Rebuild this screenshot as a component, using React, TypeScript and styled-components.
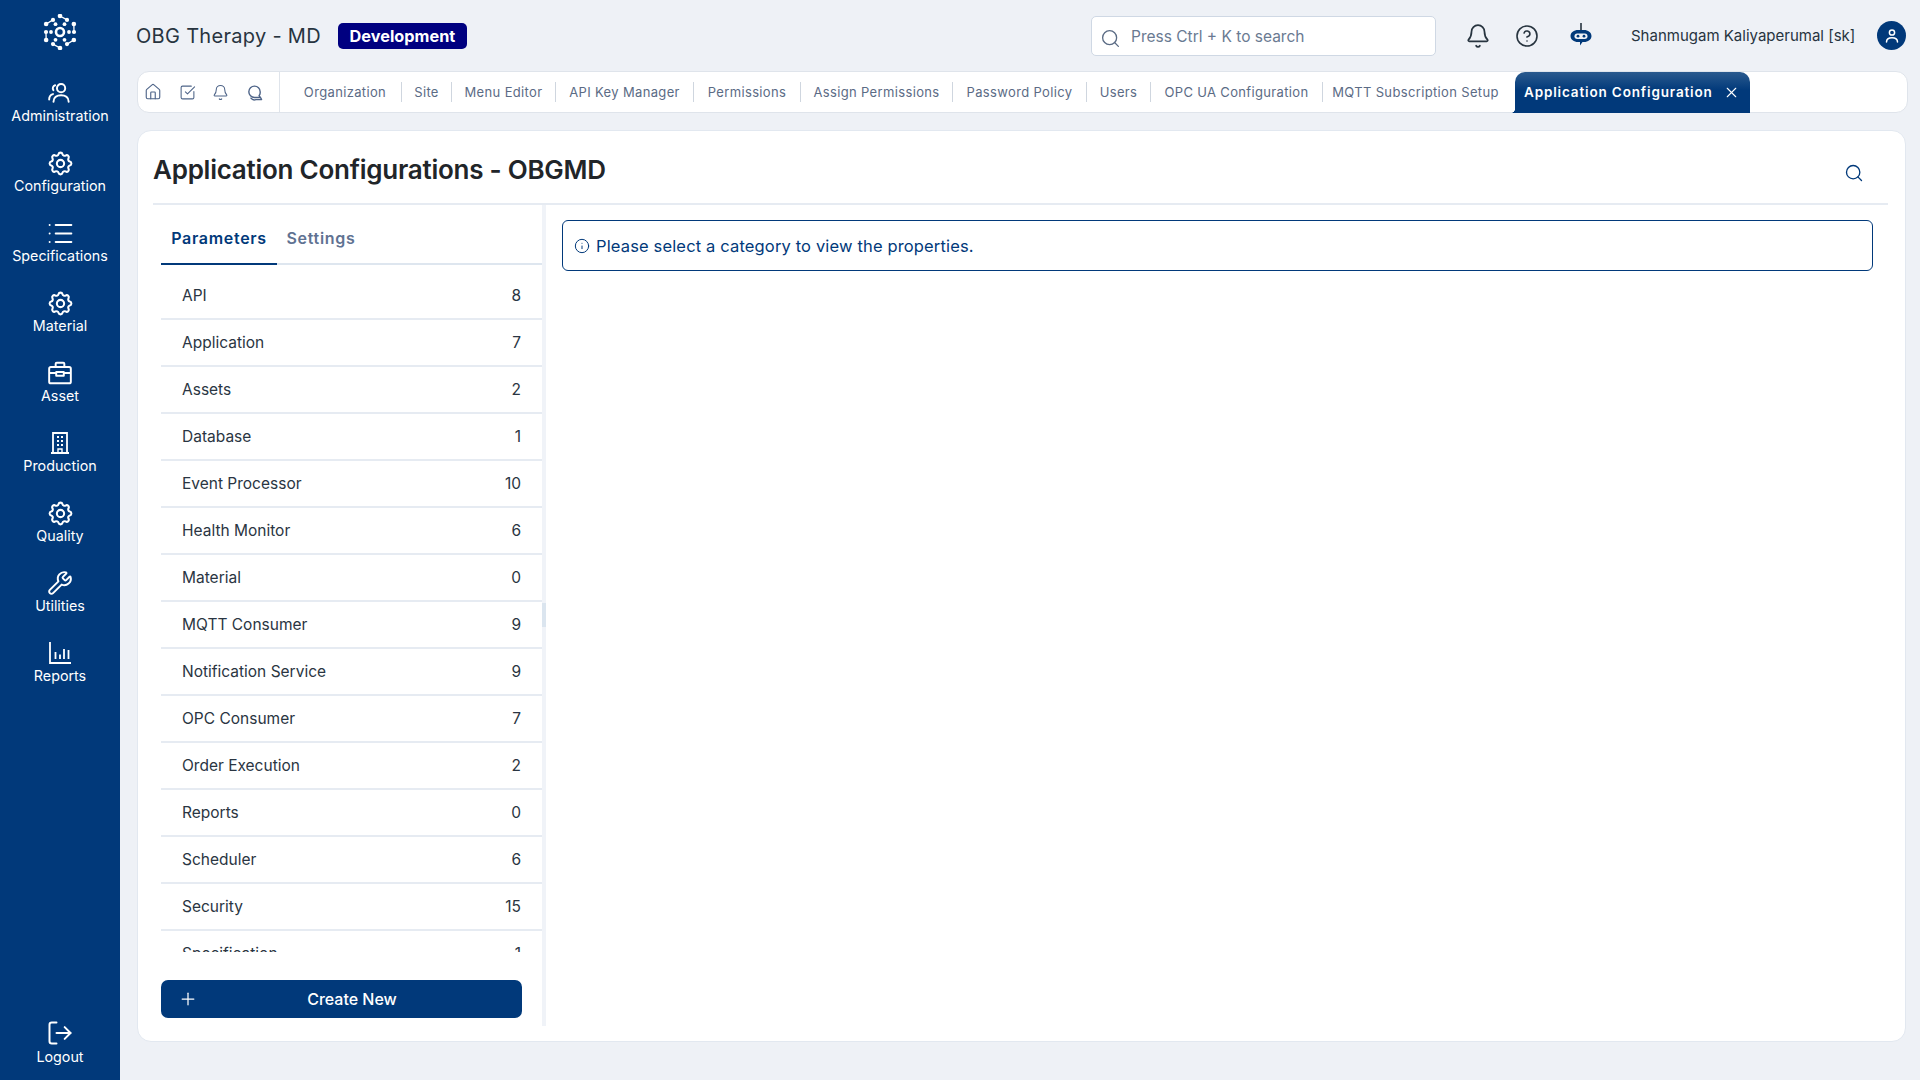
import React from "react";
import styled, { createGlobalStyle } from "styled-components";
import { Bell, CircleHelp, House, List, LogOut, Plus, Search, SquareCheckBig, Info, Wrench, X } from "lucide-react";
import { TbSettings } from "react-icons/tb";

const GlobalStyle = createGlobalStyle`
  html, body { margin: 0; padding: 0; background: #eef1f6; }
  * { box-sizing: border-box; }
  body { font-family: Inter, "Noto Sans", "Liberation Sans", sans-serif; overflow: hidden; }
`;

const Page = styled.div`
  display: flex;
  width: 1920px;
  height: 1080px;
  background: #eef1f6;
`;

const Sidebar = styled.aside`
  display: flex;
  flex-direction: column;
  width: 120px;
  flex: none;
  background: #01397a;
  color: #fff;
`;

const LogoBox = styled.div`
  display: flex;
  justify-content: center;
  align-items: flex-start;
  height: 70px;
  padding-top: 14px;
`;

const NavItem = styled.div<{ $bottom?: boolean }>`
  display: flex;
  flex-direction: column;
  align-items: center;
  gap: ${(p) => (p.$bottom ? "2px" : "1px")};
  height: 70px;
  padding-top: 11px;
  font-size: 14.3px;
  line-height: 20px;
  margin-top: ${(p) => (p.$bottom ? "auto" : "0")};
`;

const NavIcon = styled.span`
  display: flex;
  width: 24px;
  height: 24px;
  align-items: center;
  justify-content: center;
  svg { flex: none; }
`;

const Main = styled.main`
  flex: 1;
  min-width: 0;
  display: flex;
  flex-direction: column;
  padding: 0 12px 0 17px;
`;

const TopBar = styled.header`
  display: flex;
  align-items: center;
  height: 71px;
`;

const AppTitle = styled.div`
  margin-left: -1px;
  font-size: 20px;
  color: #27343f;
  letter-spacing: 0.3px;
`;

const EnvBadge = styled.span`
  margin-left: 17px;
  width: 129px;
  height: 26px;
  display: flex;
  align-items: center;
  justify-content: center;
  background: #000080;
  color: #fff;
  border-radius: 5px;
  font-size: 16.3px;
  font-weight: 700;
`;

const SearchBox = styled.div`
  margin-left: auto;
  width: 345px;
  height: 40px;
  display: flex;
  align-items: center;
  gap: 10px;
  padding: 2px 0 0 8px;
  background: #fff;
  border: 1px solid #cfd8e4;
  border-radius: 5px;
  color: #6a7a92;
  font-size: 15.5px;
  svg { flex: none; color: #5a6b84; margin-top: 3px; }
`;

const IconSlot = styled.span<{ $left: number }>`
  display: flex;
  margin-left: ${(p) => p.$left}px;
  color: #27343f;
`;

const UserArea = styled.div`
  display: flex;
  align-items: center;
  width: 315px;
`;

const UserName = styled.span`
  margin-left: 38px;
  font-size: 15px;
  color: #27343f;
  white-space: nowrap;
`;

const Avatar = styled.span`
  margin-left: auto;
  margin-right: 2px;
  width: 29px;
  height: 29px;
  border-radius: 50%;
  background: #01397a;
  display: flex;
  align-items: center;
  justify-content: center;
`;

const TabStrip = styled.nav`
  display: flex;
  align-items: center;
  height: 42px;
  background: #fff;
  border: 1px solid #dfe4eb;
  border-radius: 12px;
`;

const QuickIcons = styled.div`
  display: flex;
  align-items: center;
  height: 100%;
  width: 142px;
  flex: none;
  gap: 16.5px;
  padding-left: 6px;
  border-right: 1px solid #dfe4eb;
  color: #4e6488;
  margin-right: 9px;
`;

const PageTab = styled.div<{ $width: number; $last?: boolean }>`
  width: ${(p) => p.$width}px;
  flex: none;
  height: 20px;
  display: flex;
  align-items: center;
  justify-content: center;
  font-size: 13px;
  letter-spacing: 0.35px;
  color: #5b6b85;
  white-space: nowrap;
  border-right: ${(p) => (p.$last ? "none" : "1px solid #cfd6df")};
`;

const ActiveTab = styled.div`
  position: relative;
  flex: none;
  width: 235px;
  height: 41px;
  margin-left: 7px;
  display: flex;
  align-items: center;
  gap: 10px;
  padding-left: 9px;
  background: linear-gradient(#2a5a8e, #01397a 45%);
  color: #fff;
  border-radius: 10px 10px 0 0;
  font-size: 13.5px;
  font-weight: 600;
  letter-spacing: 0.85px;
  white-space: nowrap;
  &::before {
    content: "";
    position: absolute;
    left: -5px;
    bottom: 0;
    width: 5px;
    height: 5px;
    background: radial-gradient(circle at 0 0, transparent 5px, #01397a 5.5px);
  }
`;

const Card = styled.section`
  margin-top: 17px;
  width: 1769px;
  height: 912px;
  display: flex;
  flex-direction: column;
  background: #fff;
  border: 1px solid #e2e8f0;
  border-radius: 14px;
  padding: 0 17px 15px 15px;
`;

const CardHead = styled.div`
  display: flex;
  align-items: center;
  justify-content: space-between;
  height: 74px;
  flex: none;
  border-bottom: 2px solid #e6ebf2;
  padding: 0 24px 0 0;
  color: #01397a;
  svg { margin-top: 11px; }
`;

const Heading = styled.h1`
  margin: 5px 0 0;
  font-size: 26px;
  font-weight: 600;
  letter-spacing: -0.25px;
  color: #212529;
`;

const CardBody = styled.div`
  flex: 1;
  min-height: 0;
  display: flex;
`;

const LeftPane = styled.div`
  width: 389px;
  flex: none;
  display: flex;
  flex-direction: column;
  padding-left: 8px;
`;

const TabRow = styled.div`
  display: flex;
  height: 60px;
  flex: none;
  border-bottom: 2px solid #dee6ef;
`;

const PaneTab = styled.div<{ $active?: boolean }>`
  width: ${(p) => (p.$active ? 116 : 88)}px;
  height: 60px;
  padding-top: 22px;
  text-align: center;
  font-size: 16px;
  line-height: 22px;
  font-weight: 600;
  letter-spacing: 0.7px;
  color: ${(p) => (p.$active ? "#01397a" : "#5f7292")};
  border-bottom: 2px solid ${(p) => (p.$active ? "#01397a" : "transparent")};
`;

const RowList = styled.div`
  height: 687px;
  flex: none;
  overflow: hidden;
  padding-top: 8px;
`;

const CategoryRow = styled.div`
  display: flex;
  justify-content: space-between;
  align-items: center;
  height: 47px;
  padding: 0 21px;
  border-bottom: 2px solid #e6ebf2;
  font-size: 15.5px;
  color: #2a3542;
`;

const CreateButton = styled.button`
  margin-top: 28px;
  width: 361px;
  height: 38px;
  flex: none;
  display: flex;
  align-items: center;
  padding: 0 16px 0 17px;
  border: none;
  border-radius: 7px;
  background: #01397a;
  color: #fff;
  font-family: inherit;
  font-size: 16px;
  font-weight: 500;
  span { flex: 1; text-align: center; }
`;

const Splitter = styled.div`
  position: relative;
  width: 4px;
  flex: none;
  background: #f0f3f8;
  &::after {
    content: "";
    position: absolute;
    left: 0;
    right: 0;
    top: 398px;
    height: 24px;
    background: #dbe5ef;
  }
`;

const RightPane = styled.div`
  flex: 1;
  padding: 15px 15px 0 16px;
`;

const Notice = styled.div`
  height: 51px;
  display: flex;
  align-items: center;
  gap: 6px;
  padding-left: 11px;
  border: 1px solid #01397a;
  border-radius: 6px;
  color: #01397a;
  font-size: 16.5px;
  letter-spacing: 0.15px;
`;

const Logo = () => {
  const outer = [0, 60, 120, 180, 240, 300].map((a) => (a * Math.PI) / 180);
  const point = (r: number, a: number) => ({ x: 18 + r * Math.sin(a), y: 18 - r * Math.cos(a) });
  return (
    <svg width="36" height="36" viewBox="0 0 36 36" fill="#fff" stroke="#fff">
      {outer.map((a, i) => {
        const p = point(16, a);
        const q = point(14, a + Math.PI / 6);
        const s = point(9, a + Math.PI / 6);
        return (
          <g key={i}>
            <circle cx={p.x} cy={p.y} r="2.3" stroke="none" />
            <circle cx={q.x} cy={q.y} r="2.1" stroke="none" />
            <circle cx={s.x} cy={s.y} r="1.9" stroke="none" />
            <line x1={p.x} y1={p.y} x2={q.x} y2={q.y} strokeWidth="1.3" />
          </g>
        );
      })}
      <circle cx="18" cy="18" r="4" fill="none" strokeWidth="2.6" />
    </svg>
  );
};

const UsersIcon = () => (
  <svg width="26" height="26" viewBox="0 0 24 24" fill="none" stroke="#fff" strokeWidth="1.8" strokeLinecap="round">
    <circle cx="13" cy="7.5" r="3.8" />
    <path d="M6 20c0-3.8 3-6 7-6s7 2.2 7 6" />
    <path d="M7.5 4.8a3 3 0 0 0-1.6 4.6" />
    <path d="M2 18c0-2.8 1.2-4.4 3.5-5" />
  </svg>
);

const BriefcaseIcon = () => (
  <svg width="26" height="26" viewBox="0 0 24 24" fill="none" stroke="#fff" strokeWidth="1.8" strokeLinejoin="round">
    <rect x="2" y="6.5" width="20" height="15" rx="1.5" />
    <path d="M8 6.5V3.5a1 1 0 0 1 1-1h6a1 1 0 0 1 1 1v3" />
    <path d="M2 12h6.5M15.5 12H22M8.5 11h7v3.5h-7z" />
  </svg>
);

const BuildingIcon = () => (
  <svg width="24" height="24" viewBox="0 0 24 24" fill="none" stroke="#fff" strokeWidth="1.8">
    <path d="M5 22V2h14v20M3 22h18" />
    <path d="M10 22v-4h4v4" strokeWidth="1.4" />
    <path d="M9 6h2M13 6h2M9 10h2M13 10h2M9 14h2M13 14h2" strokeWidth="2" />
  </svg>
);

const ChartIcon = () => (
  <svg width="24" height="24" viewBox="0 0 24 24" fill="none" stroke="#fff" strokeWidth="1.8">
    <path d="M2 1v21h21" />
    <path d="M7.500 18v-7M12 18v-4.500M16 18V8M20.500 18v-9" />
  </svg>
);

const ChatIcon = () => (
  <svg width="17" height="17" viewBox="0 0 24 24" fill="none" stroke="currentColor" strokeWidth="2" strokeLinejoin="round" strokeLinecap="round">
    <path d="M20 11a8 8 0 1 0-8 8h8l-1.500-2.500A8 8 0 0 0 20 11z" />
    <path d="M7 20a6 6 0 0 0 7 2h8l-1.500-3" />
  </svg>
);

const BotIcon = () => (
  <svg width="24" height="28" viewBox="0 0 24 28" fill="#01397a">
    <rect x="11.200" y="1" width="1.600" height="7" fill="#27343f" />
    <path d="M9 8h6c4 0 7.500 2.500 7.500 6s-3.500 6-7.500 6h-1.500L11 23.500V20H9c-4 0-7.500-2.500-7.500-6S5 8 9 8z" />
    <rect x="5.500" y="11.500" width="13" height="5.500" rx="2.700" fill="#eef1f6" />
    <circle cx="9" cy="14.200" r="1.400" />
    <circle cx="15" cy="14.200" r="1.400" />
  </svg>
);

const AvatarIcon = () => (
  <svg width="18" height="18" viewBox="0 0 18 18" fill="none" stroke="#fff" strokeWidth="1.500" strokeLinecap="round">
    <circle cx="9" cy="5.500" r="2.600" />
    <path d="M3.500 15c0-2.800 2.500-4.300 5.500-4.300s5.500 1.500 5.500 4.300" />
  </svg>
);

const gear = <TbSettings size={29} strokeWidth={1.7} />;

const navItems = [
  { label: "Administration", icon: <UsersIcon /> },
  { label: "Configuration", icon: gear },
  { label: "Specifications", icon: <List size={29} strokeWidth={1.6} /> },
  { label: "Material", icon: gear },
  { label: "Asset", icon: <BriefcaseIcon /> },
  { label: "Production", icon: <BuildingIcon /> },
  { label: "Quality", icon: gear },
  { label: "Utilities", icon: <Wrench size={26} strokeWidth={1.8} /> },
  { label: "Reports", icon: <ChartIcon /> },
];

const pageTabs = [
  { label: "Organization", width: 113 },
  { label: "Site", width: 50 },
  { label: "Menu Editor", width: 104 },
  { label: "API Key Manager", width: 138 },
  { label: "Permissions", width: 107 },
  { label: "Assign Permissions", width: 152 },
  { label: "Password Policy", width: 134 },
  { label: "Users", width: 64 },
  { label: "OPC UA Configuration", width: 172 },
  { label: "MQTT Subscription Setup", width: 185, last: true },
];

const categories: [string, number][] = [
  ["API", 8],
  ["Application", 7],
  ["Assets", 2],
  ["Database", 1],
  ["Event Processor", 10],
  ["Health Monitor", 6],
  ["Material", 0],
  ["MQTT Consumer", 9],
  ["Notification Service", 9],
  ["OPC Consumer", 7],
  ["Order Execution", 2],
  ["Reports", 0],
  ["Scheduler", 6],
  ["Security", 15],
  ["Specification", 1],
];

export default function App() {
  return (
    <Page>
      <GlobalStyle />
      <Sidebar>
        <LogoBox>
          <Logo />
        </LogoBox>
        {navItems.map((item) => (
          <NavItem key={item.label}>
            <NavIcon>{item.icon}</NavIcon>
            {item.label}
          </NavItem>
        ))}
        <NavItem $bottom>
          <NavIcon>
            <LogOut size={28} strokeWidth={1.7} />
          </NavIcon>
          Logout
        </NavItem>
      </Sidebar>
      <Main>
        <TopBar>
          <AppTitle>OBG Therapy - MD</AppTitle>
          <EnvBadge>Development</EnvBadge>
          <SearchBox>
            <Search size={21} strokeWidth={1.5} />
            Press Ctrl + K to search
          </SearchBox>
          <IconSlot $left={29}>
            <Bell size={26} strokeWidth={1.6} />
          </IconSlot>
          <IconSlot $left={24}>
            <CircleHelp size={24} strokeWidth={1.6} />
          </IconSlot>
          <IconSlot $left={30}>
            <BotIcon />
          </IconSlot>
          <UserArea>
            <UserName>Shanmugam Kaliyaperumal [sk]</UserName>
            <Avatar>
              <AvatarIcon />
            </Avatar>
          </UserArea>
        </TopBar>
        <TabStrip>
          <QuickIcons>
            <House size={18} strokeWidth={1.5} />
            <SquareCheckBig size={17} strokeWidth={1.5} />
            <Bell size={17} strokeWidth={1.5} />
            <ChatIcon />
          </QuickIcons>
          {pageTabs.map((t) => (
            <PageTab key={t.label} $width={t.width} $last={t.last}>
              {t.label}
            </PageTab>
          ))}
          <ActiveTab>
            Application Configuration
            <X size={17} strokeWidth={1.5} />
          </ActiveTab>
        </TabStrip>
        <Card>
          <CardHead>
            <Heading>Application Configurations - OBGMD</Heading>
            <Search size={20} strokeWidth={1.6} />
          </CardHead>
          <CardBody>
            <LeftPane>
              <TabRow>
                <PaneTab $active>Parameters</PaneTab>
                <PaneTab>Settings</PaneTab>
              </TabRow>
              <RowList>
                {categories.map(([name, count]) => (
                  <CategoryRow key={name}>
                    <span>{name}</span>
                    <span>{count}</span>
                  </CategoryRow>
                ))}
              </RowList>
              <CreateButton>
                <Plus size={20} strokeWidth={1.5} />
                <span>Create New</span>
              </CreateButton>
            </LeftPane>
            <Splitter />
            <RightPane>
              <Notice>
                <Info size={16} strokeWidth={1.5} />
                Please select a category to view the properties.
              </Notice>
            </RightPane>
          </CardBody>
        </Card>
      </Main>
    </Page>
  );
}
